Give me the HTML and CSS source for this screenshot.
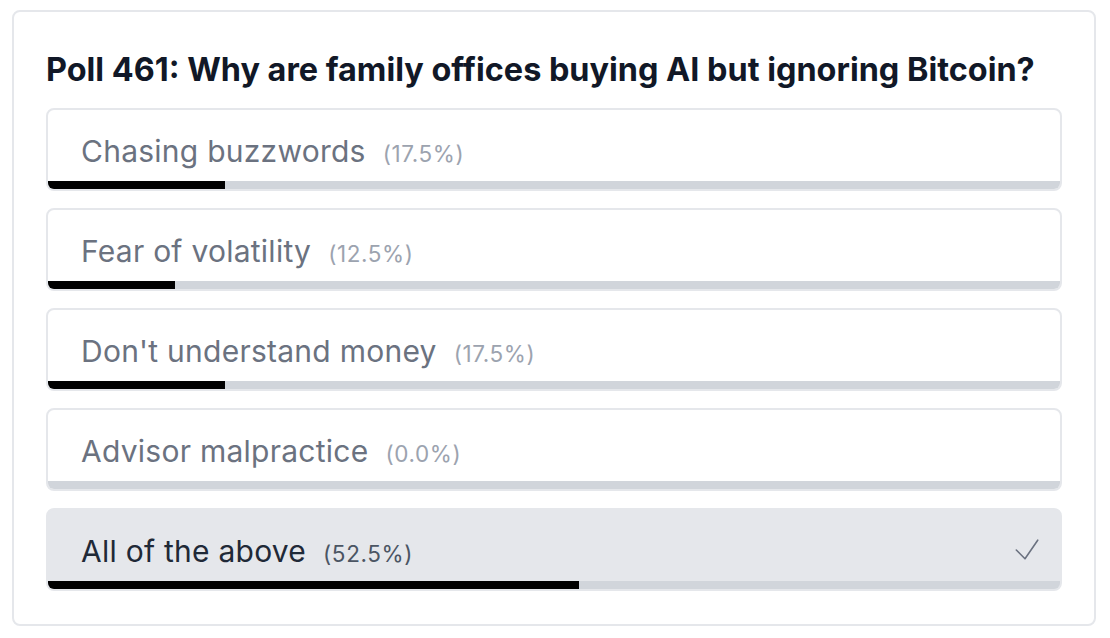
FILE: index.html
```html
<!DOCTYPE html>
<html lang="en">
<head>
<meta charset="utf-8">
<title>Poll 461</title>
<link rel="stylesheet" href="styles.css">
</head>
<body>
<div class="card">
  <h2 class="title">Poll 461: Why are family offices buying AI but ignoring Bitcoin?</h2>
  <div class="options">
    <div class="option">
      <div class="row"><span class="label">Chasing buzzwords</span><span class="pct">(17.5%)</span></div>
      <div class="bar"><div class="fill" style="width:17.5%"></div></div>
    </div>
    <div class="option">
      <div class="row"><span class="label">Fear of volatility</span><span class="pct">(12.5%)</span></div>
      <div class="bar"><div class="fill" style="width:12.5%"></div></div>
    </div>
    <div class="option">
      <div class="row"><span class="label">Don't understand money</span><span class="pct">(17.5%)</span></div>
      <div class="bar"><div class="fill" style="width:17.5%"></div></div>
    </div>
    <div class="option">
      <div class="row"><span class="label">Advisor malpractice</span><span class="pct">(0.0%)</span></div>
      <div class="bar"><div class="fill" style="width:0%"></div></div>
    </div>
    <div class="option selected">
      <div class="row"><span class="label">All of the above</span><span class="pct">(52.5%)</span>
        <svg class="check" width="24" height="21" viewBox="0 0 24 21" fill="none"><path d="M1.3 11 L10 19.8 L22.7 1.2" stroke="#6b7280" stroke-width="1.6" stroke-linecap="round" stroke-linejoin="round"/></svg>
      </div>
      <div class="bar"><div class="fill" style="width:52.5%"></div></div>
    </div>
  </div>
</div>
</body>
</html>
```
FILE: styles.css
```css
* { box-sizing: border-box; }
html, body { margin: 0; background: #ffffff; }
body {
  padding: 10px 14px 12px 12px;
  font-family: Inter, "Noto Sans", "Liberation Sans", sans-serif;
}
.card {
  border: 2px solid #e5e7eb;
  border-radius: 8px;
  padding: 38px 32px 33px 32px;
  height: 616px;
}
.title {
  margin: 0 0 18px 0;
  font-size: 32.4px;
  line-height: 40px;
  font-weight: 700;
  color: #111827;
  white-space: nowrap;
}
.options {
  display: flex;
  flex-direction: column;
  gap: 17px;
}
.option {
  border: 2px solid #e5e7eb;
  border-radius: 8px;
  overflow: hidden;
  background: #ffffff;
  height: 83px;
  display: flex;
  flex-direction: column;
}
.option.selected {
  background: #e5e7eb;
}
.row {
  flex: 1;
  display: flex;
  align-items: center;
  padding: 11px 21px 0 33px;
}
.label {
  font-size: 30px;
  color: #6b7280;
  letter-spacing: 0.25px;
}
.pct {
  font-size: 22.5px;
  color: #9ca3af;
  margin-left: 17px;
  padding-top: 4px;
  letter-spacing: 0.6px;
}
.selected .label { color: #1f2937; }
.selected .pct { color: #4b5563; }
.check { margin-left: auto; margin-top: -4px; }
.bar {
  height: 8px;
  background: #d1d5db;
}
.fill {
  height: 100%;
  background: #000000;
}
```
